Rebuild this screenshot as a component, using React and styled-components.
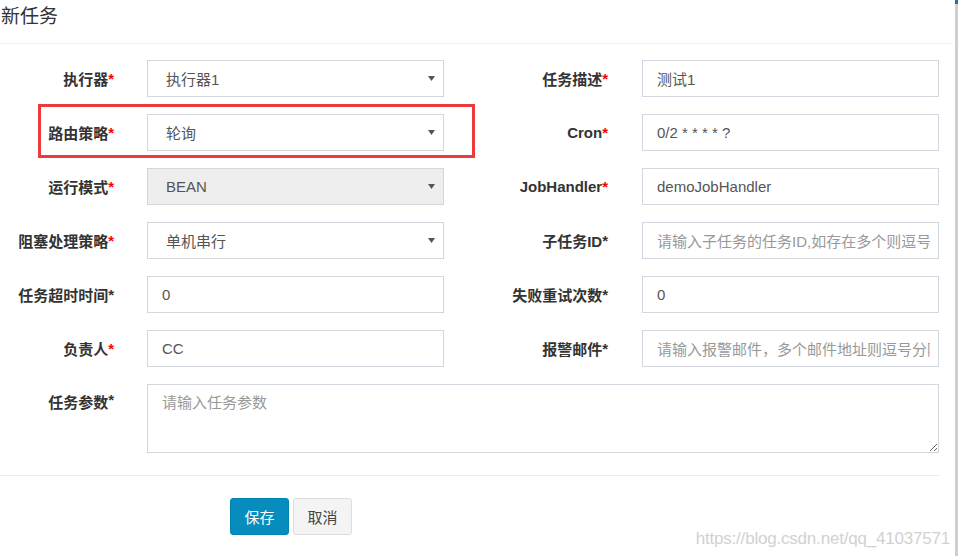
import React from 'react';
import styled, { createGlobalStyle } from 'styled-components';

const Global = createGlobalStyle`
  html, body { margin: 0; padding: 0; background: #fff; }
  body { font-family: "Liberation Sans", "Noto Sans CJK SC", sans-serif; }
  #root { width: 958px; height: 556px; }
`;

const Screen = styled.div`
  position: relative;
  display: flex;
  width: 958px;
  height: 556px;
  overflow: hidden;
  background: #fff;
`;

const Modal = styled.div`
  flex: 1;
  min-width: 0;
  display: flex;
  flex-direction: column;
`;

const ScrollStrip = styled.div`
  width: 3px;
  background: linear-gradient(#2a6fa0 0 4px, #cfcfcf 4px 100%);
`;

const Header = styled.div`
  height: 43px;
  border-bottom: 1px solid #efefef;
  margin-right: 2px;
`;

const Title = styled.h4`
  margin: 0;
  padding: 4px 0 0 1px;
  font-size: 19px;
  line-height: 22px;
  font-weight: normal;
  color: #333;
  font-family: "Noto Sans CJK SC", sans-serif;
`;

const Body = styled.div`
  padding-top: 16px;
`;

const FormGrid = styled.div`
  display: grid;
  grid-template-columns: 147px 297px 198px 297px;
  grid-auto-rows: 37px;
  row-gap: 17px;
`;

const Label = styled.label`
  display: flex;
  align-items: ${p => (p.$top ? 'flex-start' : 'center')};
  justify-content: flex-end;
  padding-right: ${p => p.$pr}px;
  padding-top: ${p => (p.$top ? '7px' : '0')};
  font-size: 15px;
  font-weight: bold;
  color: #333;
  white-space: nowrap;
`;

const Star = styled.span`
  color: ${p => (p.$red ? '#f00' : '#333')};
  font-weight: bold;
  font-family: "Liberation Sans", sans-serif;
`;

const TextBox = styled.div`
  box-sizing: border-box;
  height: 37px;
  display: flex;
  align-items: center;
  padding: 0 8px 0 ${p => (p.$select ? '18px' : '14px')};
  border: 1px solid #d2d6de;
  background: ${p => (p.$disabled ? '#eee' : '#fff')};
  font-size: 15px;
  color: ${p => (p.$placeholder ? '#999' : '#555')};
  white-space: nowrap;
  overflow: hidden;
`;

const Value = styled.span`
  flex: 1;
  overflow: hidden;
`;

const Arrow = styled.svg`
  flex: none;
  width: 7px;
  height: 5px;
`;

const AreaRow = styled.div`
  display: grid;
  grid-template-columns: 147px 792px;
  margin-top: 17px;
`;

const TextArea = styled.textarea`
  display: block;
  box-sizing: border-box;
  width: 792px;
  height: 69px;
  margin: 0;
  padding: 6px 14px;
  border: 1px solid #d2d6de;
  border-radius: 0;
  font-family: "Liberation Sans", "Noto Sans CJK SC", sans-serif;
  font-size: 15px;
  color: #555;
  outline: none;
  &::placeholder { color: #999; }
`;

const Divider = styled.div`
  width: 939px;
  height: 0;
  border-top: 1px solid #ececec;
  margin-top: 22px;
`;

const Footer = styled.div`
  display: flex;
  gap: 4px;
  padding: 22px 0 0 230px;
`;

const Button = styled.button`
  box-sizing: border-box;
  width: 59px;
  height: 37px;
  border-radius: 3px;
  font-family: "Noto Sans CJK SC", sans-serif;
  font-size: 15px;
  cursor: pointer;
  border: 1px solid ${p => (p.$primary ? '#0284b0' : '#ddd')};
  background: ${p => (p.$primary ? '#078dbd' : '#f4f4f4')};
  color: ${p => (p.$primary ? '#fff' : '#444')};
`;

const Highlight = styled.div`
  position: absolute;
  left: 38px;
  top: 104px;
  width: 437px;
  height: 54px;
  box-sizing: border-box;
  border: 3px solid #ef3a3d;
  pointer-events: none;
`;

const Watermark = styled.div`
  position: absolute;
  right: 8px;
  bottom: 7px;
  font-family: "Liberation Sans", sans-serif;
  font-size: 17px;
  color: #d2d2d2;
  letter-spacing: -0.2px;
`;

const rows = [
  {
    l: { label: '执行器', red: true, value: '执行器1', select: true },
    r: { label: '任务描述', red: true, value: '测试1' },
  },
  {
    l: { label: '路由策略', red: true, value: '轮询', select: true },
    r: { label: 'Cron', red: true, value: '0/2 * * * * ?' },
  },
  {
    l: { label: '运行模式', red: true, value: 'BEAN', select: true, disabled: true },
    r: { label: 'JobHandler', red: true, value: 'demoJobHandler' },
  },
  {
    l: { label: '阻塞处理策略', red: true, value: '单机串行', select: true },
    r: { label: '子任务ID', red: false, value: '请输入子任务的任务ID,如存在多个则逗号分隔', placeholder: true },
  },
  {
    l: { label: '任务超时时间', red: false, value: '0' },
    r: { label: '失败重试次数', red: false, value: '0' },
  },
  {
    l: { label: '负责人', red: true, value: 'CC' },
    r: { label: '报警邮件', red: false, value: '请输入报警邮件，多个邮件地址则逗号分隔', placeholder: true },
  },
];

function Field({ f, pr }) {
  return (
    <>
      <Label $pr={pr}>
        {f.label}
        <Star $red={f.red}>*</Star>
      </Label>
      <TextBox $select={f.select} $disabled={f.disabled} $placeholder={f.placeholder}>
        <Value>{f.value}</Value>
        {f.select && (
          <Arrow viewBox="0 0 7 5">
            <polygon points="0,0 7,0 3.5,5" fill="#555" />
          </Arrow>
        )}
      </TextBox>
    </>
  );
}

export default function App() {
  return (
    <Screen>
      <Global />
      <Modal>
        <Header>
          <Title>新任务</Title>
        </Header>
        <Body>
          <FormGrid>
            {rows.map((row, i) => (
              <React.Fragment key={i}>
                <Field f={row.l} pr={33} />
                <Field f={row.r} pr={34} />
              </React.Fragment>
            ))}
          </FormGrid>
          <AreaRow>
            <Label $pr={33} $top>
              任务参数<Star>*</Star>
            </Label>
            <TextArea placeholder="请输入任务参数" />
          </AreaRow>
          <Divider />
          <Footer>
            <Button $primary>保存</Button>
            <Button>取消</Button>
          </Footer>
        </Body>
      </Modal>
      <ScrollStrip />
      <Highlight />
      <Watermark>https://blog.csdn.net/qq_41037571</Watermark>
    </Screen>
  );
}
